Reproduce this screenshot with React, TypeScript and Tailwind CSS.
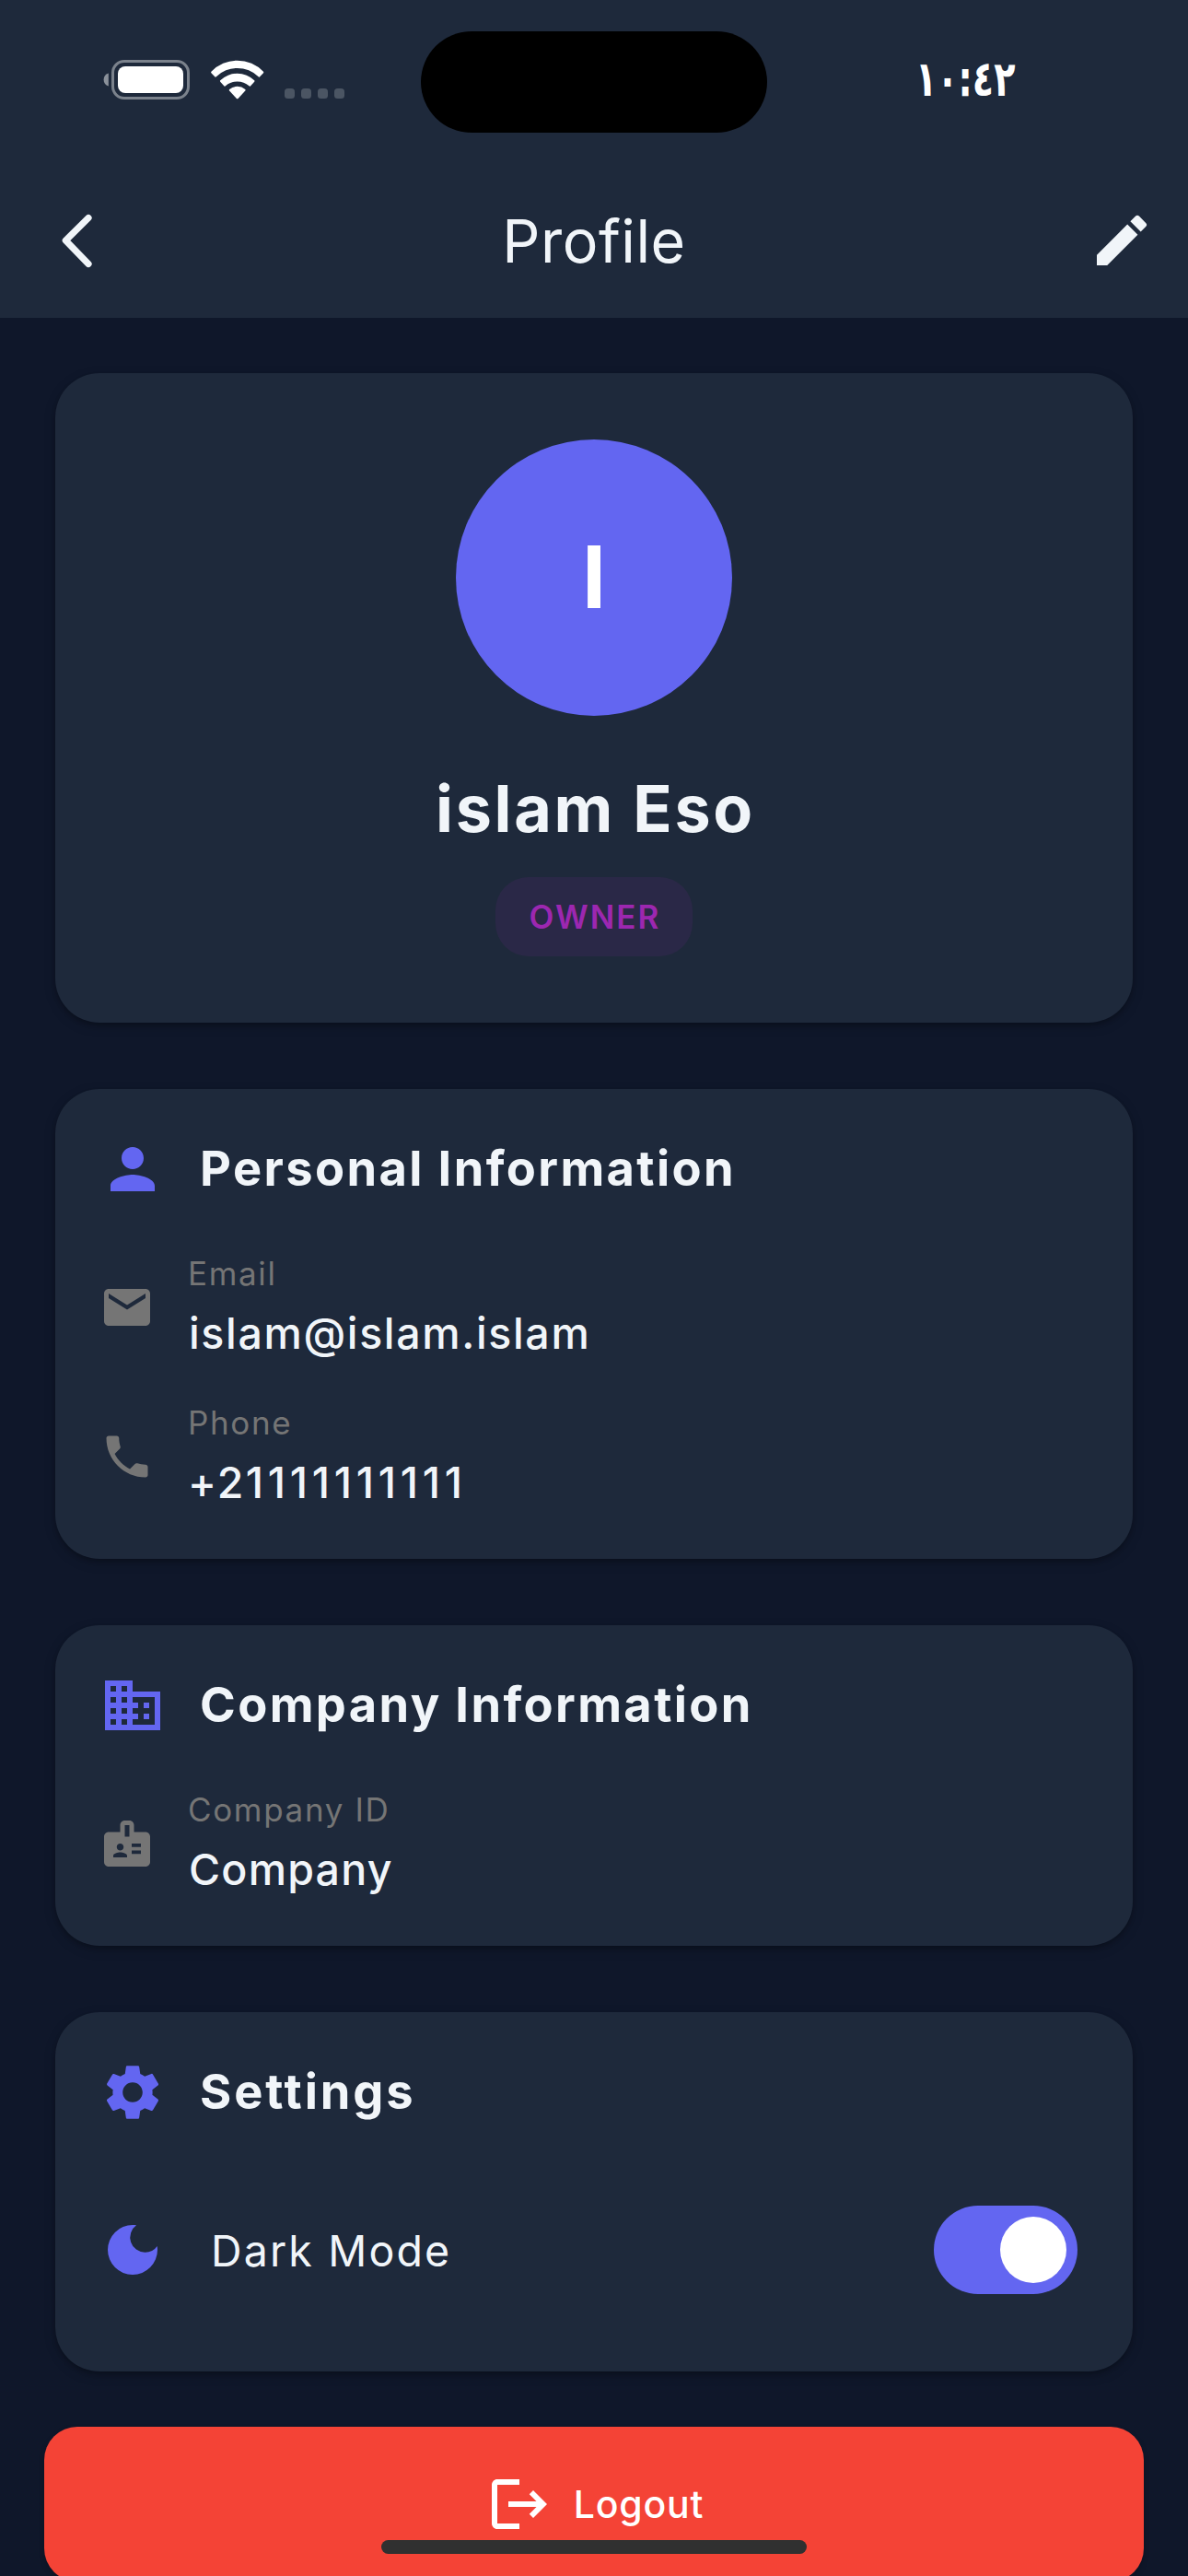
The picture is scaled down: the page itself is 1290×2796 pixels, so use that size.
import type { ReactNode } from 'react';
import type { IconType } from 'react-icons';
import {
  MdBadge,
  MdBusiness,
  MdDarkMode,
  MdEdit,
  MdEmail,
  MdLogout,
  MdPerson,
  MdPhone,
  MdSettings,
} from 'react-icons/md';

function Battery() {
  return (
    <svg width="94" height="43" viewBox="0 0 94 43" className="shrink-0">
      <path d="M5.8 14.5v14C2.6 27.6.6 25 .6 21.5s2-6.1 5.2-7z" fill="#8b919a" />
      <rect x="10.5" y="1.5" width="82" height="40" rx="12.5" fill="none" stroke="#7b828c" strokeWidth="3" />
      <rect x="16" y="7" width="71" height="29" rx="8" fill="#fff" />
    </svg>
  );
}

function Wifi() {
  return (
    <svg width="58" height="43" viewBox="0 0 58 43" fill="#fff" className="shrink-0">
      <path d="M.4 12.8A39 39 0 0 1 57 12.8Q57.6 13.6 57 14.3L52.9 18.4Q52.3 18.9 51.6 18.3A32.6 32.6 0 0 0 5.8 18.3Q5.1 18.9 4.5 18.4L.4 14.3Q-.2 13.6.4 12.8z" />
      <path d="M10.2 22.3A26.5 26.5 0 0 1 47.2 22.3Q47.8 23 47.2 23.7L42.9 28.4Q42.2 28.9 41.5 28.3A19.5 19.5 0 0 0 15.9 28.3Q15.2 28.9 14.5 28.4L10.2 23.7Q9.6 23 10.2 22.3z" />
      <path d="M20.1 31.9A13.6 13.6 0 0 1 37.3 31.9Q37.9 32.6 37.3 33.4L29.5 42Q28.7 42.7 27.9 42L20.1 33.4Q19.5 32.6 20.1 31.9z" />
    </svg>
  );
}

function StatusBar() {
  return (
    <div className="flex h-[177px] items-start pl-[112px]">
      <div className="mt-[65px] flex items-end">
        <Battery />
        <div className="ml-[23px] flex">
          <Wifi />
        </div>
        <div className="ml-[22px] flex gap-[7px] pb-px">
          {[0, 1, 2, 3].map((bar) => (
            <span key={bar} className="size-[11px] rounded-[3.5px] bg-[#4b5563]" />
          ))}
        </div>
      </div>
      <div className="mt-[34px] ml-[83px] h-[110px] w-[376px] rounded-full bg-black" />
      <bdo
        dir="ltr"
        className="mt-[56px] ml-[161px] block h-[60px] origin-left scale-x-[0.8] font-['DejaVu_Sans_Condensed','DejaVu_Sans',sans-serif] text-[53px] leading-[60px] font-bold whitespace-nowrap text-white"
      >
        ١٠:٤٢
      </bdo>
    </div>
  );
}

function Header() {
  return (
    <header className="h-[345px] bg-[#1e293b]">
      <StatusBar />
      <div className="flex h-[168px] items-center justify-between px-[36px]">
        <button className="flex size-[72px] items-center justify-center" aria-label="Back">
          <svg width="72" height="72" viewBox="0 0 72 72" fill="none" stroke="#f1f5f9" strokeWidth="7.2" strokeLinecap="round" strokeLinejoin="round">
            <path d="M60 11.5L35.3 36L60 61.5" />
          </svg>
        </button>
        <h1 className="pt-[2px] text-[64.5px] leading-[80px] font-normal tracking-[0.52px]">Profile</h1>
        <button className="flex size-[72px] items-center justify-center" aria-label="Edit">
          <MdEdit size={72} />
        </button>
      </div>
    </header>
  );
}

function Card({ children }: { children: ReactNode }) {
  return (
    <section className="rounded-[48px] bg-[#1e293b] shadow-[0_3px_5px_rgba(0,0,0,0.2),0_4px_14px_rgba(0,0,0,0.14)]">
      {children}
    </section>
  );
}

function SectionTitle({ icon: Icon, children }: { icon: IconType; children: ReactNode }) {
  return (
    <div className="flex h-[78px] items-center">
      <Icon size={72} className="shrink-0 text-[#6366f1]" />
      <h2 className="ml-[37px] pb-[2px] text-[52.4px] leading-[76px] font-bold tracking-[2.38px]">{children}</h2>
    </div>
  );
}

function InfoRow({ icon: Icon, label, children }: { icon: IconType; label: string; children: ReactNode }) {
  return (
    <div className="flex h-[114px] items-center">
      <Icon size={60} className="shrink-0 text-[#757575]" />
      <div className="ml-[36px] flex flex-col gap-[16px]">
        <span className="text-[35px] leading-[41px] tracking-[1.65px] text-[#757575]">{label}</span>
        <span className="text-[46.5px] leading-[57px] font-medium">{children}</span>
      </div>
    </div>
  );
}

export default function App() {
  return (
    <div className="relative h-[2796px] w-[1290px] overflow-hidden bg-[#0f172a] font-['Inter',sans-serif] text-[#f1f5f9]">
      <Header />
      <main className="flex flex-col gap-[72px] px-[60px] pt-[60px]">
        <Card>
          <div className="flex h-[705px] flex-col items-center pt-[72px]">
            <div className="flex size-[300px] items-center justify-center rounded-full bg-[#6366f1] text-[93px] font-bold text-white">
              I
            </div>
            <h2 className="mt-[48px] pl-[3px] text-[70px] leading-[105px] font-bold tracking-[2.67px]">islam Eso</h2>
            <div className="mt-[22px] flex h-[86px] w-[214px] items-center justify-center rounded-[36px] bg-[#9c27b0]/10 pl-[2px] text-[35px] font-semibold tracking-[2.05px] text-[#9c27b0]">
              OWNER
            </div>
          </div>
        </Card>

        <Card>
          <div className="p-[48px] pb-[54px]">
            <SectionTitle icon={MdPerson}>Personal Information</SectionTitle>
            <div className="mt-[54px] flex flex-col gap-[48px]">
              <InfoRow icon={MdEmail} label="Email">
                <span className="ml-px tracking-[1.65px]">islam@islam.islam</span>
              </InfoRow>
              <InfoRow icon={MdPhone} label="Phone">
                <span className="tracking-[2.2px]">
                  +2<span className="tracking-[4.7px]">1111111111</span>
                </span>
              </InfoRow>
            </div>
          </div>
        </Card>

        <Card>
          <div className="p-[48px] pb-[54px]">
            <SectionTitle icon={MdBusiness}>Company Information</SectionTitle>
            <div className="mt-[54px]">
              <InfoRow icon={MdBadge} label="Company ID">
                <span className="ml-px tracking-[1.23px]">Company</span>
              </InfoRow>
            </div>
          </div>
        </Card>

        <Card>
          <div className="h-[390px] p-[48px]">
            <SectionTitle icon={MdSettings}>
              <span className="tracking-[2.9px]">Settings</span>
            </SectionTitle>
            <div className="mt-[84px] flex h-[96px] items-center pr-[12px]">
              <MdDarkMode size={72} className="shrink-0 text-[#6366f1]" />
              <span className="ml-[49px] pt-px text-[46.5px] leading-[60px] font-normal tracking-[2.15px]">Dark Mode</span>
              <div className="ml-auto flex h-[96px] w-[156px] items-center justify-end rounded-full bg-[#6366f1] pr-[12px]">
                <div className="size-[72px] rounded-full bg-white" />
              </div>
            </div>
          </div>
        </Card>
      </main>

      <button className="mx-[48px] mt-[60px] flex h-[168px] w-[1194px] items-center justify-center rounded-[36px] bg-[#f44336] pl-[2px] text-white shadow-[0_3px_6px_rgba(0,0,0,0.2)]">
        <MdLogout size={72} className="shrink-0" />
        <span className="ml-[23px] text-[41px] leading-[60px] font-medium tracking-[0.8px]">Logout</span>
      </button>

      {/* Home indicator floats over the scrolling content */}
      <div className="absolute bottom-[24px] left-[414px] h-[15px] w-[462px] rounded-full bg-[#303030]" />
    </div>
  );
}
